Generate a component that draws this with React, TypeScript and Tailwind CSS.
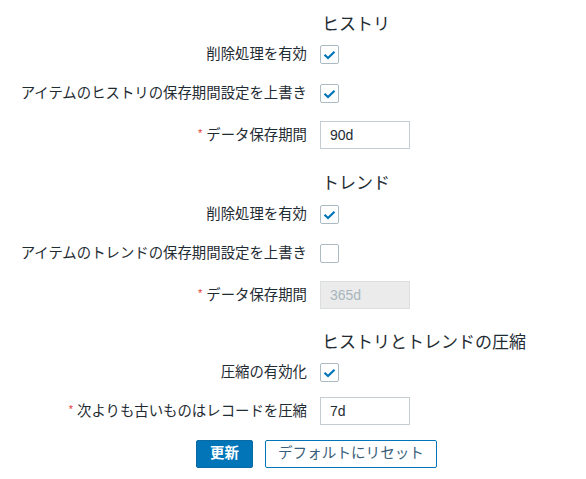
import React from 'react';

const font = { fontFamily: '"Liberation Sans", "Noto Sans CJK JP", sans-serif' };

function Check({ checked }: { checked: boolean }) {
  return (
    <div className="w-[19px] h-[19px] rounded-[2px] border border-[#acbbc2] bg-white flex items-center justify-center">
      {checked && (
        <svg width="13" height="10" viewBox="0 0 13 10">
          <polyline points="1.5,4.8 5,8 11.5,1.8" fill="none" stroke="#0275b8" strokeWidth="2.2" />
        </svg>
      )}
    </div>
  );
}

function Row({
  label,
  required,
  children,
  className,
}: {
  label: string;
  required?: boolean;
  children: React.ReactNode;
  className?: string;
}) {
  return (
    <div className={`grid grid-cols-[307px_1fr] gap-x-[13px] items-center ${className ?? ''}`}>
      <div className="text-right text-[14.4px] text-[#1f2c33] leading-none whitespace-nowrap">
        {required && <span className="text-[#e33734] text-[11px] mr-[4px] relative -top-[3px]">*</span>}
        {label}
      </div>
      <div className="flex">{children}</div>
    </div>
  );
}

function Header({ title, className }: { title: string; className?: string }) {
  return (
    <div className={`grid grid-cols-[307px_1fr] gap-x-[13px] h-[24px] items-center ${className ?? ''}`}>
      <div />
      <div className="pl-[2px] text-[17px] text-[#1f2c33] leading-none whitespace-nowrap">{title}</div>
    </div>
  );
}

function TextBox({ value, disabled }: { value: string; disabled?: boolean }) {
  return (
    <div
      className={`w-[90px] h-[28px] border flex items-center pl-[9px] text-[14px] ${
        disabled ? 'bg-[#ebebeb] border-[#dcdfe0] text-[#a7b6bd]' : 'bg-white border-[#c3cdd2] text-[#1f2c33]'
      }`}
    >
      {value}
    </div>
  );
}

export default function App() {
  return (
    <div className="w-[586px] h-[479px] bg-white pt-[12px]" style={font}>
      <Header title="ヒストリ" />
      <Row label="削除処理を有効" className="mt-[9px] h-[19px]">
        <Check checked />
      </Row>
      <Row label="アイテムのヒストリの保存期間設定を上書き" className="mt-[20px] h-[19px]">
        <Check checked />
      </Row>
      <Row label="データ保存期間" required className="mt-[18px] h-[28px]">
        <TextBox value="90d" />
      </Row>

      <Header title="トレンド" className="mt-[22px]" />
      <Row label="削除処理を有効" className="mt-[10px] h-[19px]">
        <Check checked />
      </Row>
      <Row label="アイテムのトレンドの保存期間設定を上書き" className="mt-[20px] h-[19px]">
        <Check checked={false} />
      </Row>
      <Row label="データ保存期間" required className="mt-[18px] h-[28px]">
        <TextBox value="365d" disabled />
      </Row>

      <Header title="ヒストリとトレンドの圧縮" className="mt-[21px]" />
      <Row label="圧縮の有効化" className="mt-[9px] h-[19px]">
        <Check checked />
      </Row>
      <Row label="次よりも古いものはレコードを圧縮" required className="mt-[15px] h-[28px]">
        <TextBox value="7d" />
      </Row>

      <div className="flex gap-[12px] ml-[196px] mt-[15px]">
        <button className="w-[57px] h-[28px] rounded-[2px] bg-[#0275b8] border border-[#0a6aa3] text-white text-[14.4px] font-semibold">
          更新
        </button>
        <button className="w-[172px] h-[28px] rounded-[2px] bg-white border border-[#0275b8] text-[#3b5f7a] text-[14.6px]">
          デフォルトにリセット
        </button>
      </div>
    </div>
  );
}
